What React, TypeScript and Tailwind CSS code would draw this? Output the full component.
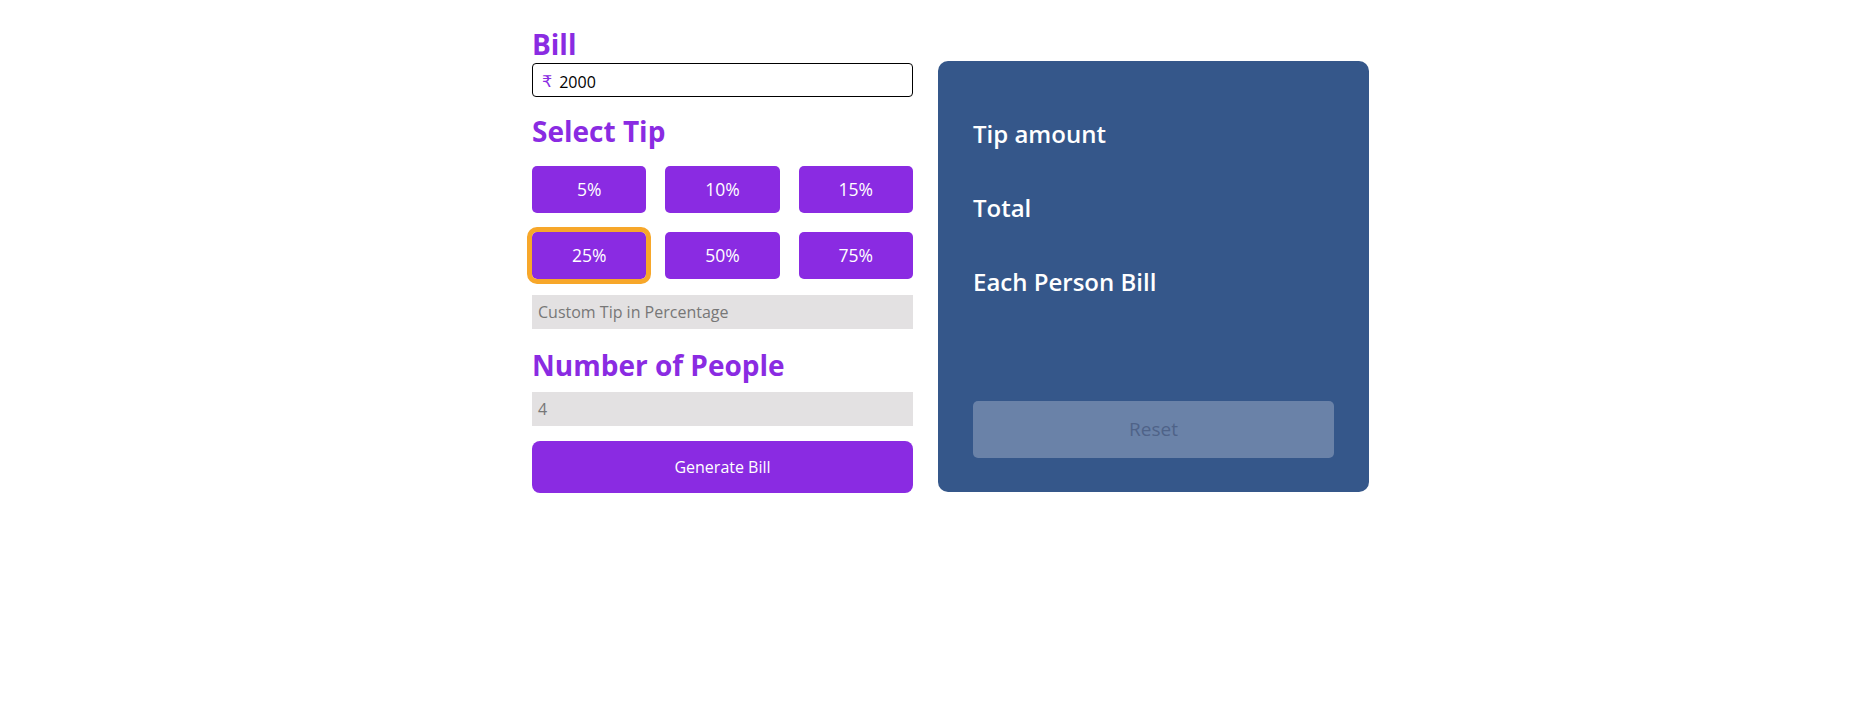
import React from "react";

export default function App() {
  const tips = ["5%", "10%", "15%", "25%", "50%", "75%"];
  return (
    <div
      className="min-h-[711px] w-full bg-white pl-[532px] pt-[28px]"
      style={{ fontFamily: '"Open Sans", "Noto Sans", sans-serif' }}
    >
      <div className="flex items-end gap-[25px]">
        <div className="flex w-[381px] flex-col">
          <h2 className="h-[32px] text-[28px] font-bold leading-[32px] text-[#8a2be2]">Bill</h2>
          <div className="mt-[3px] flex h-[34px] items-center rounded-[4px] border border-black px-[9px] pt-[3px]">
            <span
              className="text-[16px] leading-none text-[#8a2be2]"
              style={{ fontFamily: '"DejaVu Sans", "Noto Sans", sans-serif' }}
            >
              ₹
            </span>
            <span className="ml-[7px] text-[16px] text-black">2000</span>
          </div>
          <h2 className="mt-[18px] h-[32px] text-[28px] font-bold leading-[32px] text-[#8a2be2]">Select Tip</h2>
          <div className="mt-[19px] grid grid-cols-3 gap-x-[19px] gap-y-[19px]">
            {tips.map((t) => (
              <button
                key={t}
                className={
                  "h-[47px] rounded-[5px] bg-[#8a2be2] text-[17.5px] text-white " +
                  (t === "25%" ? "outline-[5px] outline-solid outline-offset-[0px] outline-[#f7a72a]" : "")
                }
              >
                {t}
              </button>
            ))}
          </div>
          <div className="mt-[16px] flex h-[34px] items-center bg-[#e3e1e2] px-[6px] text-[16px] text-[#777]">
            Custom Tip in Percentage
          </div>
          <h2 className="mt-[20px] h-[32px] text-[28px] font-bold leading-[32px] text-[#8a2be2]">Number of People</h2>
          <div className="mt-[11px] flex h-[34px] items-center bg-[#e3e1e2] px-[6px] text-[16px] text-[#777]">4</div>
          <button className="mt-[15px] h-[52px] rounded-[8px] bg-[#8a2be2] text-[16px] text-white">Generate Bill</button>
        </div>
        <div className="mb-[1px] flex h-[431px] w-[431px] flex-col rounded-[10px] bg-[#35578a] px-[35px] pb-[34px] pt-[57px]">
          <div className="flex flex-col gap-[42px] text-[24px] font-semibold leading-[32px] text-white">
            <div>Tip amount</div>
            <div>Total</div>
            <div>Each Person Bill</div>
          </div>
          <button className="mt-auto h-[57px] w-full rounded-[5px] bg-[#6a82a8] text-[19px] text-[#4f6388]">Reset</button>
        </div>
      </div>
    </div>
  );
}
